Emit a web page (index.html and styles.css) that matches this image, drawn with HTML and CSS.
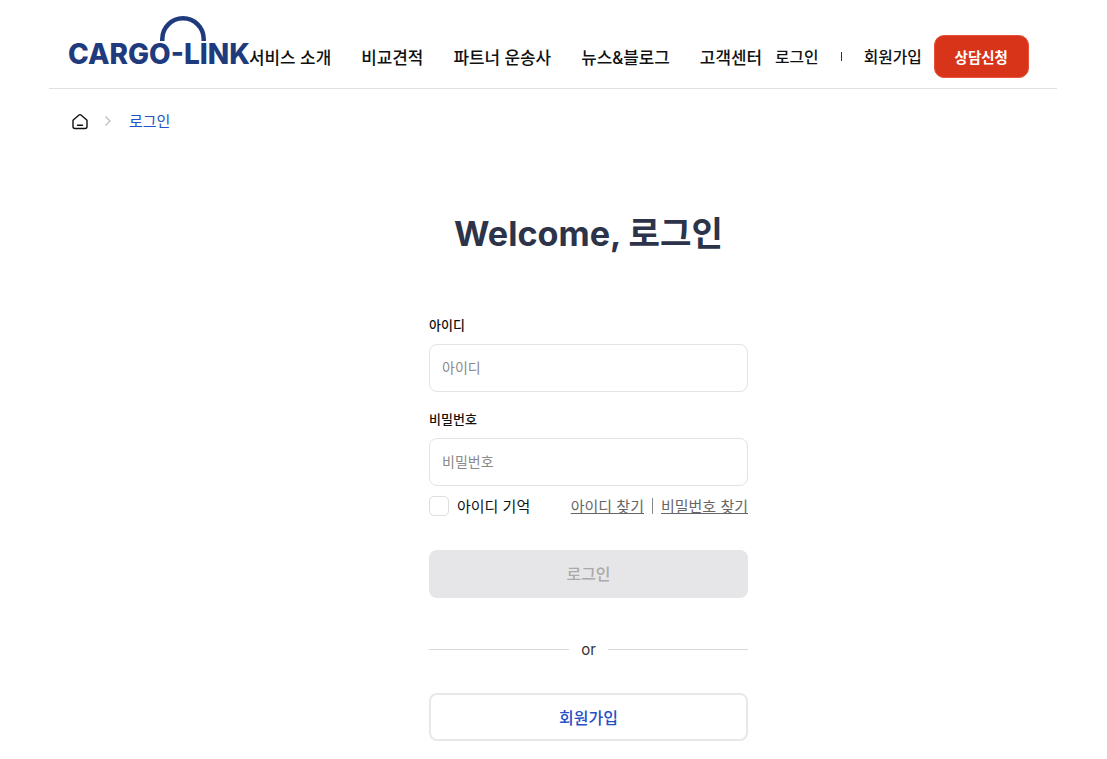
FILE: index.html
```html
<!DOCTYPE html>
<html lang="ko">
  <head>
    <meta charset="UTF-8" />
    <title>로그인</title>
    <link rel="stylesheet" href="styles.css">
  </head>
  <body>
    <header class="header">
      <a class="logo">
        <svg class="logo-arc" width="46" height="25" viewBox="0 0 46 25"><path d="M2.300 25 V23 A20.700 20.700 0 0 1 43.700 23 V25" fill="none" stroke="#1f3a7d" stroke-width="4.500"/></svg>
        <span class="logo-text">CARGO-LINK</span>
      </a>
      <nav class="nav">
        <a>서비스 소개</a>
        <a>비교견적</a>
        <a>파트너 운송사</a>
        <a>뉴스&amp;블로그</a>
        <a>고객센터</a>
      </nav>
      <div class="user-menu">
        <a>로그인</a>
        <span class="sep"></span>
        <a>회원가입</a>
        <button class="cta">상담신청</button>
      </div>
    </header>

    <div class="breadcrumb">
      <svg width="18" height="18" viewBox="0 0 18 18" fill="none" stroke="#111" stroke-width="1.400" stroke-linecap="round" stroke-linejoin="round"><path d="M2 8.200 7.700 3.200a2 2 0 0 1 2.600 0L16 8.200V14.500a2 2 0 0 1-2 2H4a2 2 0 0 1-2-2z"/><path d="M6.500 13.300h5"/></svg>
      <svg class="chev" width="8" height="12" viewBox="0 0 8 12" fill="none" stroke="#bbb" stroke-width="1.200"><path d="M1.500 1.500 6 6l-4.500 4.500"/></svg>
      <span class="crumb">로그인</span>
    </div>

    <main class="login">
      <h1>Welcome, 로그인</h1>
      <form class="form">
        <label>아이디</label>
        <input type="text" placeholder="아이디" />
        <label class="second">비밀번호</label>
        <input type="password" placeholder="비밀번호" />
        <div class="options">
          <span class="check"><i></i>아이디 기억</span>
          <span class="links"><a>아이디 찾기</a><b></b><a>비밀번호 찾기</a></span>
        </div>
        <button type="button" class="submit">로그인</button>
        <div class="or"><span>or</span></div>
        <button type="button" class="signup">회원가입</button>
      </form>
    </main>
  </body>
</html>
```

FILE: styles.css
```css
* {
  box-sizing: border-box;
}
body {
  margin: 0;
  font-family: Inter, "Noto Sans CJK KR", sans-serif;
  background-color: #fff;
  color: #111;
}
.header {
  display: flex;
  align-items: center;
  margin: 0 50px 0 49px;
  height: 89px;
  padding: 25px 28px 0 20px;
  border-bottom: 1px solid #e0e0e0;
  white-space: nowrap;
}
.logo {
  display: flex;
  flex-direction: column;
  align-items: flex-start;
  align-self: flex-start;
  flex-shrink: 0;
  width: 180px;
  margin-top: -9px;
}
.logo-arc {
  margin-left: 91px;
  margin-bottom: -1px;
}
.logo-text {
  margin-left: -1px;
  font-size: 28px;
  font-weight: 800;
  color: #1f3a7d;
  line-height: 28px;
}
.nav {
  display: flex;
  flex-shrink: 0;
  gap: 30px;
  font-size: 16.900px;
  font-weight: 500;
}
.user-menu {
  display: flex;
  align-items: center;
  flex-shrink: 0;
  margin-left: 13px;
  font-size: 15.800px;
  font-weight: 500;
}
.sep {
  width: 1px;
  height: 9px;
  background-color: #333;
  margin: 0 22px;
}
.cta {
  width: 95px;
  height: 43px;
  margin-left: 12px;
  background-color: #d8341a;
  color: #fff;
  border: 1px solid #e8523a;
  border-radius: 10px;
  font: inherit;
  font-weight: 600;
  font-size: 14.500px;
}
.breadcrumb {
  display: flex;
  align-items: center;
  padding: 21px 0 0 71px;
  font-size: 15px;
}
.chev {
  margin: 0 17px 0 15px;
}
.crumb {
  color: #2450c8;
}
.login {
  display: flex;
  flex-direction: column;
  align-items: center;
  padding-left: 70px;
}
h1 {
  font-size: 34.200px;
  font-weight: 700;
  color: #2d3349;
  margin: 75px 0 0;
}
.form {
  display: flex;
  flex-direction: column;
  width: 319px;
  margin-top: 59px;
  font-size: 13px;
}
label {
  font-weight: 500;
  margin-bottom: 10px;
}
.second {
  margin-top: 17px;
}
input {
  height: 48px;
  padding: 0 12px 2px;
  border: 1.500px solid #e2e3e5;
  border-radius: 8px;
  font: inherit;
  font-size: 14px;
}
input::placeholder {
  color: #8a8a8a;
}
.options {
  display: flex;
  justify-content: space-between;
  align-items: center;
  margin-top: 9px;
  font-size: 15px;
}
.check {
  display: flex;
  align-items: center;
  gap: 8px;
}
.check i {
  width: 20px;
  height: 20px;
  border: 1px solid #dcdde0;
  border-radius: 5px;
}
.links {
  display: flex;
  align-items: center;
  color: #666;
}
.links a {
  text-decoration: underline;
}
.links b {
  width: 1px;
  height: 16px;
  background-color: #888;
  margin: 0 8px;
}
.submit {
  height: 48px;
  margin-top: 34px;
  padding-bottom: 3px;
  background-color: #e6e6e8;
  color: #aaa;
  border: none;
  border-radius: 8px;
  font: inherit;
  font-size: 16px;
  font-weight: 500;
}
.or {
  display: flex;
  align-items: center;
  gap: 12px;
  margin-top: 42px;
  font-size: 15px;
  color: #333;
}
.or::before,
.or::after {
  content: "";
  flex: 1;
  height: 1px;
  background-color: #d8d8d8;
}
.signup {
  height: 48px;
  margin-top: 34px;
  background-color: #fff;
  color: #2450c8;
  border: 2px solid #e8e8ea;
  border-radius: 8px;
  font: inherit;
  font-size: 16px;
  font-weight: 500;
}
```
